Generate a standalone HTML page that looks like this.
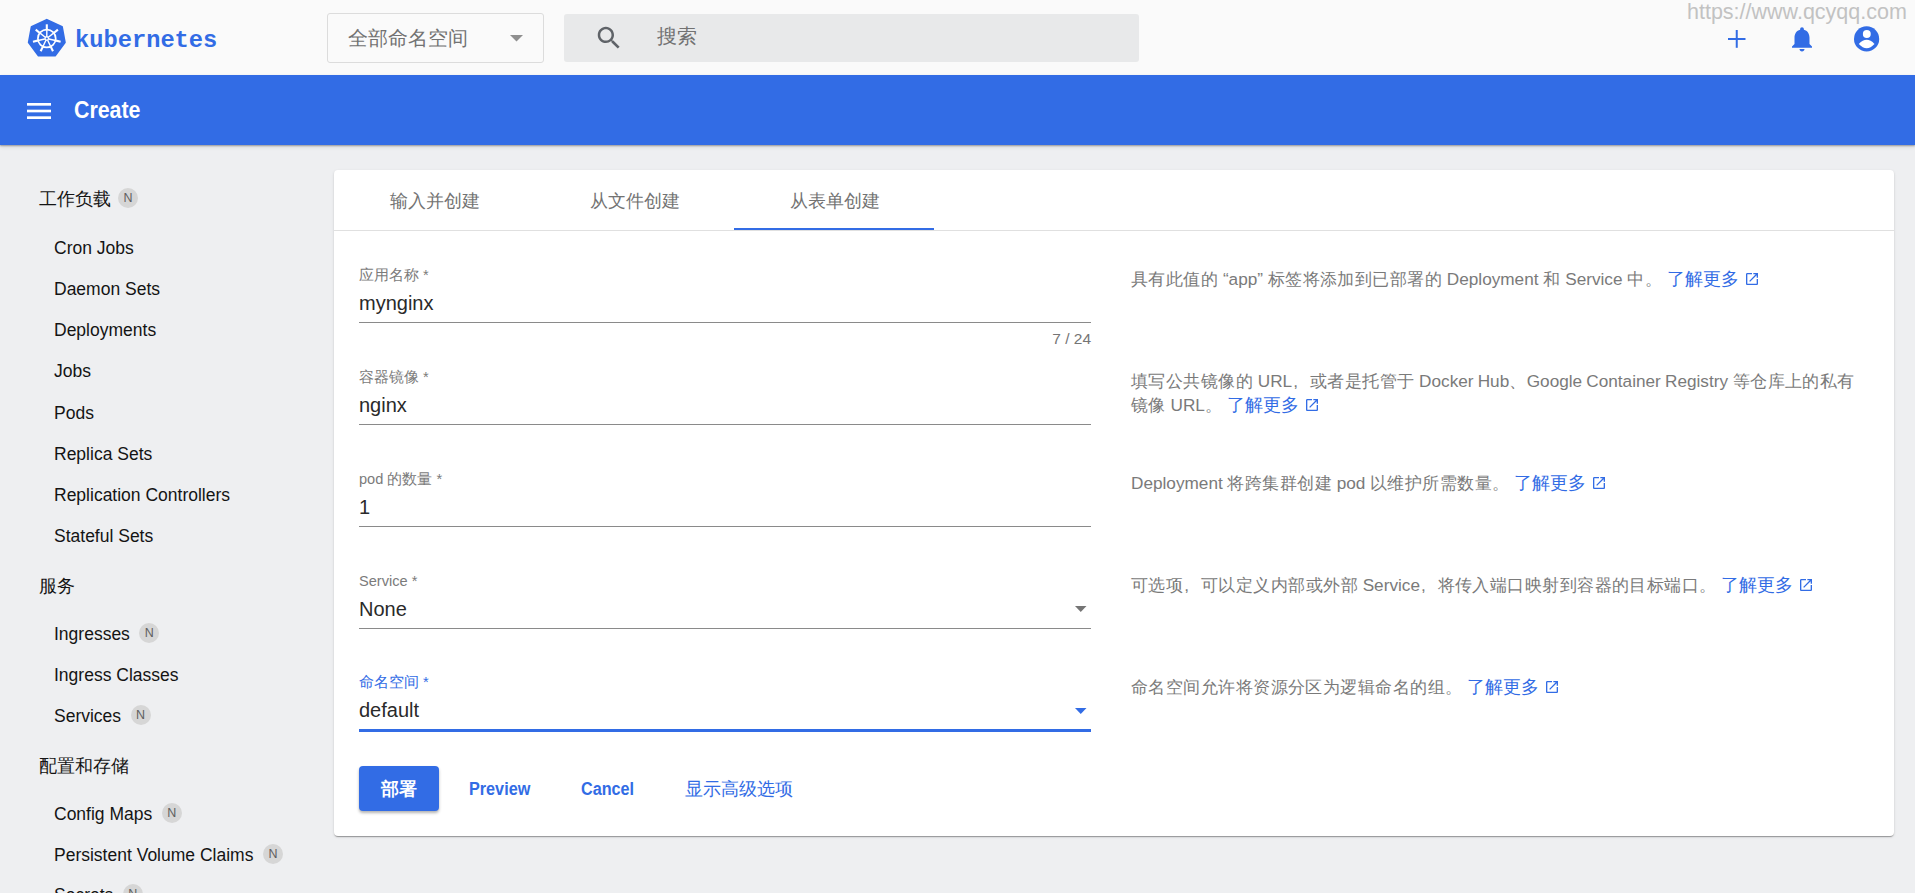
<!DOCTYPE html>
<html><head><meta charset="utf-8">
<style>
*{box-sizing:border-box;margin:0;padding:0}
html,body{width:1915px;height:893px;overflow:hidden;background:#eeeff1;font-family:"Liberation Sans",sans-serif;}
.abs{position:absolute;white-space:nowrap}
#top{position:absolute;left:0;top:0;width:1915px;height:75px;background:#fafafa}
#bar{position:absolute;left:0;top:75px;width:1915px;height:70px;background:#326ce5;box-shadow:0 1px 1.5px rgba(0,0,0,.3),0 2px 4px rgba(0,0,0,.1)}
.side-h{position:absolute;left:39px;font-size:18px;color:#141414;line-height:22px}
.side-i{position:absolute;left:54px;font-size:17.5px;color:#141414;line-height:22px}
.badge{display:inline-block;width:20px;height:20px;border-radius:50%;background:#d6d6d6;color:#5f5f5f;font-size:12.5px;line-height:20px;text-align:center;vertical-align:middle;margin-left:9.5px;position:relative;top:-2px}
#card{position:absolute;left:334px;top:170px;width:1560px;height:666px;background:#fff;border-radius:4px;box-shadow:0 2px 1px -1px rgba(0,0,0,.2),0 1px 1px 0 rgba(0,0,0,.14),0 1px 3px 0 rgba(0,0,0,.12)}
.tab{position:absolute;top:1px;width:200px;height:60px;text-align:center;line-height:60px;font-size:17.5px;color:#737373;padding-left:2px}
.lbl{position:absolute;left:25px;font-size:14.6px;color:#7b7b7b;line-height:16px}
.val{position:absolute;left:25px;font-size:20px;color:#2a2a2a;line-height:22px}
.line{position:absolute;left:25px;width:732px;height:1px;background:#8a8a8a}
.help{position:absolute;left:797px;font-size:17.2px;color:#7a7a7a;line-height:24px;white-space:nowrap;letter-spacing:.45px;word-spacing:-.6px}
.help a{color:#326ce5;text-decoration:none;font-size:18px;letter-spacing:0}
.help .l{letter-spacing:0}
.fc{display:inline-block;width:17.6px;letter-spacing:0;padding-left:1px}
.ext{display:inline-block;vertical-align:middle;margin-left:5px;position:relative;top:-1px}
.btn{position:absolute;top:596px;font-size:18px;color:#326ce5;font-weight:bold;line-height:20px;transform:scaleX(.9);transform-origin:0 0}
</style></head><body>
<div id="top">
  <svg class="abs" style="left:24px;top:14px" width="48" height="48" viewBox="0 0 48 48">
    <polygon points="22.8,5.8 37.9,12.8 40.8,28.4 31,41.6 14.6,41.6 4.8,28.4 7.7,12.8" fill="#326ce5" stroke="#326ce5" stroke-width="2" stroke-linejoin="round"/>
    <g stroke="#fff" fill="none"><circle cx="22.8" cy="24.5" r="8.9" stroke-width="1.7"/><g stroke-width="1.4"><line x1="22.80" y1="22.50" x2="22.80" y2="15.50"/><line x1="24.36" y1="23.25" x2="29.84" y2="18.89"/><line x1="24.75" y1="24.95" x2="31.57" y2="26.50"/><line x1="23.67" y1="26.30" x2="26.70" y2="32.61"/><line x1="21.93" y1="26.30" x2="18.90" y2="32.61"/><line x1="20.85" y1="24.95" x2="14.03" y2="26.50"/><line x1="21.24" y1="23.25" x2="15.76" y2="18.89"/></g><g stroke-width="2.1"><line x1="22.80" y1="16.00" x2="22.80" y2="10.30"/><line x1="29.45" y1="19.20" x2="33.90" y2="15.65"/><line x1="31.09" y1="26.39" x2="36.64" y2="27.66"/><line x1="26.49" y1="32.16" x2="28.96" y2="37.29"/><line x1="19.11" y1="32.16" x2="16.64" y2="37.29"/><line x1="14.51" y1="26.39" x2="8.96" y2="27.66"/><line x1="16.15" y1="19.20" x2="11.70" y2="15.65"/></g></g>
    <circle cx="22.8" cy="24.5" r="2.4" fill="#fff"/><circle cx="22.8" cy="24.5" r="1.1" fill="#326ce5"/>
  </svg>
  <div class="abs" style="left:75px;top:26px;font-family:'Liberation Mono',monospace;font-size:24.5px;font-weight:bold;color:#326ce5;line-height:30px;transform:scaleX(.968);transform-origin:0 0">kubernetes</div>
  <div class="abs" style="left:327px;top:13px;width:217px;height:50px;border:1px solid #dcdcdc;border-radius:3px;background:#fafafa"></div>
  <div class="abs" style="left:348px;top:26px;font-size:20px;color:#727272;line-height:24px">全部命名空间</div>
  <svg class="abs" style="left:510px;top:35px" width="13" height="7"><polygon points="0,0 13,0 6.5,6.5" fill="#8f8f8f"/></svg>
  <div class="abs" style="left:564px;top:14px;width:575px;height:48px;background:#e8e9ea;border-radius:3px"></div>
  <svg class="abs" style="left:594px;top:23px" width="30" height="30" viewBox="0 0 24 24"><path fill="#5f6368" d="M15.5 14h-.79l-.28-.27C15.41 12.59 16 11.11 16 9.5 16 5.91 13.09 3 9.5 3S3 5.91 3 9.5 5.91 16 9.5 16c1.61 0 3.09-.59 4.23-1.57l.27.28v.79l5 4.99L20.49 19l-4.99-5zm-6 0C7.01 14 5 11.99 5 9.5S7.01 5 9.5 5 14 7.01 14 9.5 11.99 14 9.5 14z"/></svg>
  <div class="abs" style="left:657px;top:24px;font-size:20px;color:#727272;line-height:24px">搜索</div>
  <div class="abs" style="left:1687px;top:0px;font-size:21.5px;color:#c2c2c2;line-height:24px">https://www.qcyqq.com</div>
  <svg class="abs" style="left:1727px;top:29px" width="20" height="20"><rect x="1" y="9" width="17.5" height="2" fill="#326ce5"/><rect x="8.75" y="1" width="2" height="17.8" fill="#326ce5"/></svg>
  <svg class="abs" style="left:1786.5px;top:23.5px" width="30" height="30" viewBox="0 0 24 24"><path fill="#326ce5" d="M12 22c1.1 0 2-.9 2-2h-4c0 1.1.89 2 2 2zm6-6v-5c0-3.07-1.64-5.64-4.5-6.32V4c0-.83-.67-1.5-1.5-1.5s-1.5.67-1.5 1.5v.68C7.63 5.36 6 7.92 6 11v5l-2 2v1h16v-1l-2-2z"/></svg>
  <svg class="abs" style="left:1850px;top:22px" width="34" height="34" viewBox="1850 22 34 34"><circle cx="1866.6" cy="38.9" r="12.6" fill="#326ce5"/><circle cx="1866.8" cy="34" r="3.95" fill="#fff"/><path d="M1858.8 44 Q1866.7 35.6 1874.5 44 Q1866.7 52.4 1858.8 44Z" fill="#fff"/></svg>
</div>
<div id="bar">
  <svg class="abs" style="left:27px;top:27px" width="24" height="18"><rect x="0" y="1" width="24" height="2.67" fill="#fff"/><rect x="0" y="7.67" width="24" height="2.67" fill="#fff"/><rect x="0" y="14.33" width="24" height="2.67" fill="#fff"/></svg>
  <div class="abs" style="left:74px;top:22px;font-size:24px;font-weight:bold;color:#fff;line-height:26px;transform:scaleX(.89);transform-origin:0 0">Create</div>
</div>

<!-- sidebar -->
<div class="side-h" style="top:188px">工作负载<span class="badge" style="margin-left:7px">N</span></div>
<div class="side-i" style="top:237px">Cron Jobs</div>
<div class="side-i" style="top:278px">Daemon Sets</div>
<div class="side-i" style="top:319px">Deployments</div>
<div class="side-i" style="top:360px">Jobs</div>
<div class="side-i" style="top:402px">Pods</div>
<div class="side-i" style="top:443px">Replica Sets</div>
<div class="side-i" style="top:484px">Replication Controllers</div>
<div class="side-i" style="top:525px">Stateful Sets</div>
<div class="side-h" style="top:575px">服务</div>
<div class="side-i" style="top:623px">Ingresses<span class="badge">N</span></div>
<div class="side-i" style="top:664px">Ingress Classes</div>
<div class="side-i" style="top:705px">Services<span class="badge">N</span></div>
<div class="side-h" style="top:755px">配置和存储</div>
<div class="side-i" style="top:803px">Config Maps<span class="badge">N</span></div>
<div class="side-i" style="top:844px">Persistent Volume Claims<span class="badge">N</span></div>
<div class="side-i" style="top:884px">Secrets<span class="badge">N</span></div>

<div id="card">
  <div class="tab" style="left:0">输入并创建</div>
  <div class="tab" style="left:200px">从文件创建</div>
  <div class="tab" style="left:400px">从表单创建</div>
  <div class="abs" style="left:400px;top:58px;width:200px;height:2px;background:#326ce5"></div>
  <div class="abs" style="left:0;top:60px;width:1560px;height:1px;background:#e0e0e0"></div>

  <div class="lbl" style="top:97px">应用名称 *</div>
  <div class="val" style="top:122px">mynginx</div>
  <div class="line" style="top:152px"></div>
  <div class="abs" style="left:657px;top:161px;width:100px;text-align:right;font-size:15.5px;color:#757575;line-height:16px">7 / 24</div>

  <div class="lbl" style="top:199px">容器镜像 *</div>
  <div class="val" style="top:224px">nginx</div>
  <div class="line" style="top:254px"></div>

  <div class="lbl" style="top:301px">pod 的数量 *</div>
  <div class="val" style="top:326px">1</div>
  <div class="line" style="top:356px"></div>

  <div class="lbl" style="top:403px">Service *</div>
  <div class="val" style="top:428px">None</div>
  <svg class="abs" style="left:740.5px;top:436px" width="12" height="7"><polygon points="0,0 11.5,0 5.75,5.9" fill="#757575"/></svg>
  <div class="line" style="top:458px"></div>

  <div class="lbl" style="top:504px;color:#326ce5">命名空间 *</div>
  <div class="val" style="top:529px">default</div>
  <svg class="abs" style="left:740.5px;top:538px" width="12" height="7"><polygon points="0,0 11.5,0 5.75,5.9" fill="#326ce5"/></svg>
  <div class="line" style="top:559px;height:2.7px;background:#326ce5"></div>

  <div class="abs" style="left:25px;top:596px;width:80px;height:45px;background:#326ce5;border-radius:4px;box-shadow:0 2px 3px rgba(0,0,0,.3);color:#fff;font-size:18px;line-height:47px;text-align:center;font-weight:bold">部署</div>
  <div class="btn" style="left:135px;top:609px">Preview</div>
  <div class="btn" style="left:247px;top:609px">Cancel</div>
  <div class="btn" style="left:351px;top:609px;font-weight:normal;transform:none">显示高级选项</div>

  <div class="help" style="top:97px">具有此值的 <span class="l">“app”</span> 标签将添加到已部署的 <span class="l">Deployment</span> 和 <span class="l">Service</span> 中。 <a>了解更多<svg class="ext" width="16" height="16" viewBox="0 0 24 24"><path fill="#326ce5" d="M19 19H5V5h7V3H5c-1.11 0-2 .9-2 2v14c0 1.1.89 2 2 2h14c1.1 0 2-.9 2-2v-7h-2v7zM14 3v2h3.59l-9.83 9.83 1.41 1.41L19 6.41V10h2V3h-7z"/></svg></a></div>
  <div class="help" style="top:199px">填写公共镜像的 <span class="l">URL</span><span class="fc">,</span>或者是托管于 <span class="l">Docker Hub</span>、<span class="l">Google Container Registry</span> 等仓库上的私有<br>镜像 <span class="l">URL</span>。 <a>了解更多<svg class="ext" width="16" height="16" viewBox="0 0 24 24"><path fill="#326ce5" d="M19 19H5V5h7V3H5c-1.11 0-2 .9-2 2v14c0 1.1.89 2 2 2h14c1.1 0 2-.9 2-2v-7h-2v7zM14 3v2h3.59l-9.83 9.83 1.41 1.41L19 6.41V10h2V3h-7z"/></svg></a></div>
  <div class="help" style="top:301px"><span class="l">Deployment</span> 将跨集群创建 <span class="l">pod</span> 以维护所需数量。 <a>了解更多<svg class="ext" width="16" height="16" viewBox="0 0 24 24"><path fill="#326ce5" d="M19 19H5V5h7V3H5c-1.11 0-2 .9-2 2v14c0 1.1.89 2 2 2h14c1.1 0 2-.9 2-2v-7h-2v7zM14 3v2h3.59l-9.83 9.83 1.41 1.41L19 6.41V10h2V3h-7z"/></svg></a></div>
  <div class="help" style="top:403px">可选项<span class="fc">,</span>可以定义内部或外部 <span class="l">Service</span><span class="fc">,</span>将传入端口映射到容器的目标端口。 <a>了解更多<svg class="ext" width="16" height="16" viewBox="0 0 24 24"><path fill="#326ce5" d="M19 19H5V5h7V3H5c-1.11 0-2 .9-2 2v14c0 1.1.89 2 2 2h14c1.1 0 2-.9 2-2v-7h-2v7zM14 3v2h3.59l-9.83 9.83 1.41 1.41L19 6.41V10h2V3h-7z"/></svg></a></div>
  <div class="help" style="top:505px">命名空间允许将资源分区为逻辑命名的组。 <a>了解更多<svg class="ext" width="16" height="16" viewBox="0 0 24 24"><path fill="#326ce5" d="M19 19H5V5h7V3H5c-1.11 0-2 .9-2 2v14c0 1.1.89 2 2 2h14c1.1 0 2-.9 2-2v-7h-2v7zM14 3v2h3.59l-9.83 9.83 1.41 1.41L19 6.41V10h2V3h-7z"/></svg></a></div>
</div>
</div>
</body></html>
